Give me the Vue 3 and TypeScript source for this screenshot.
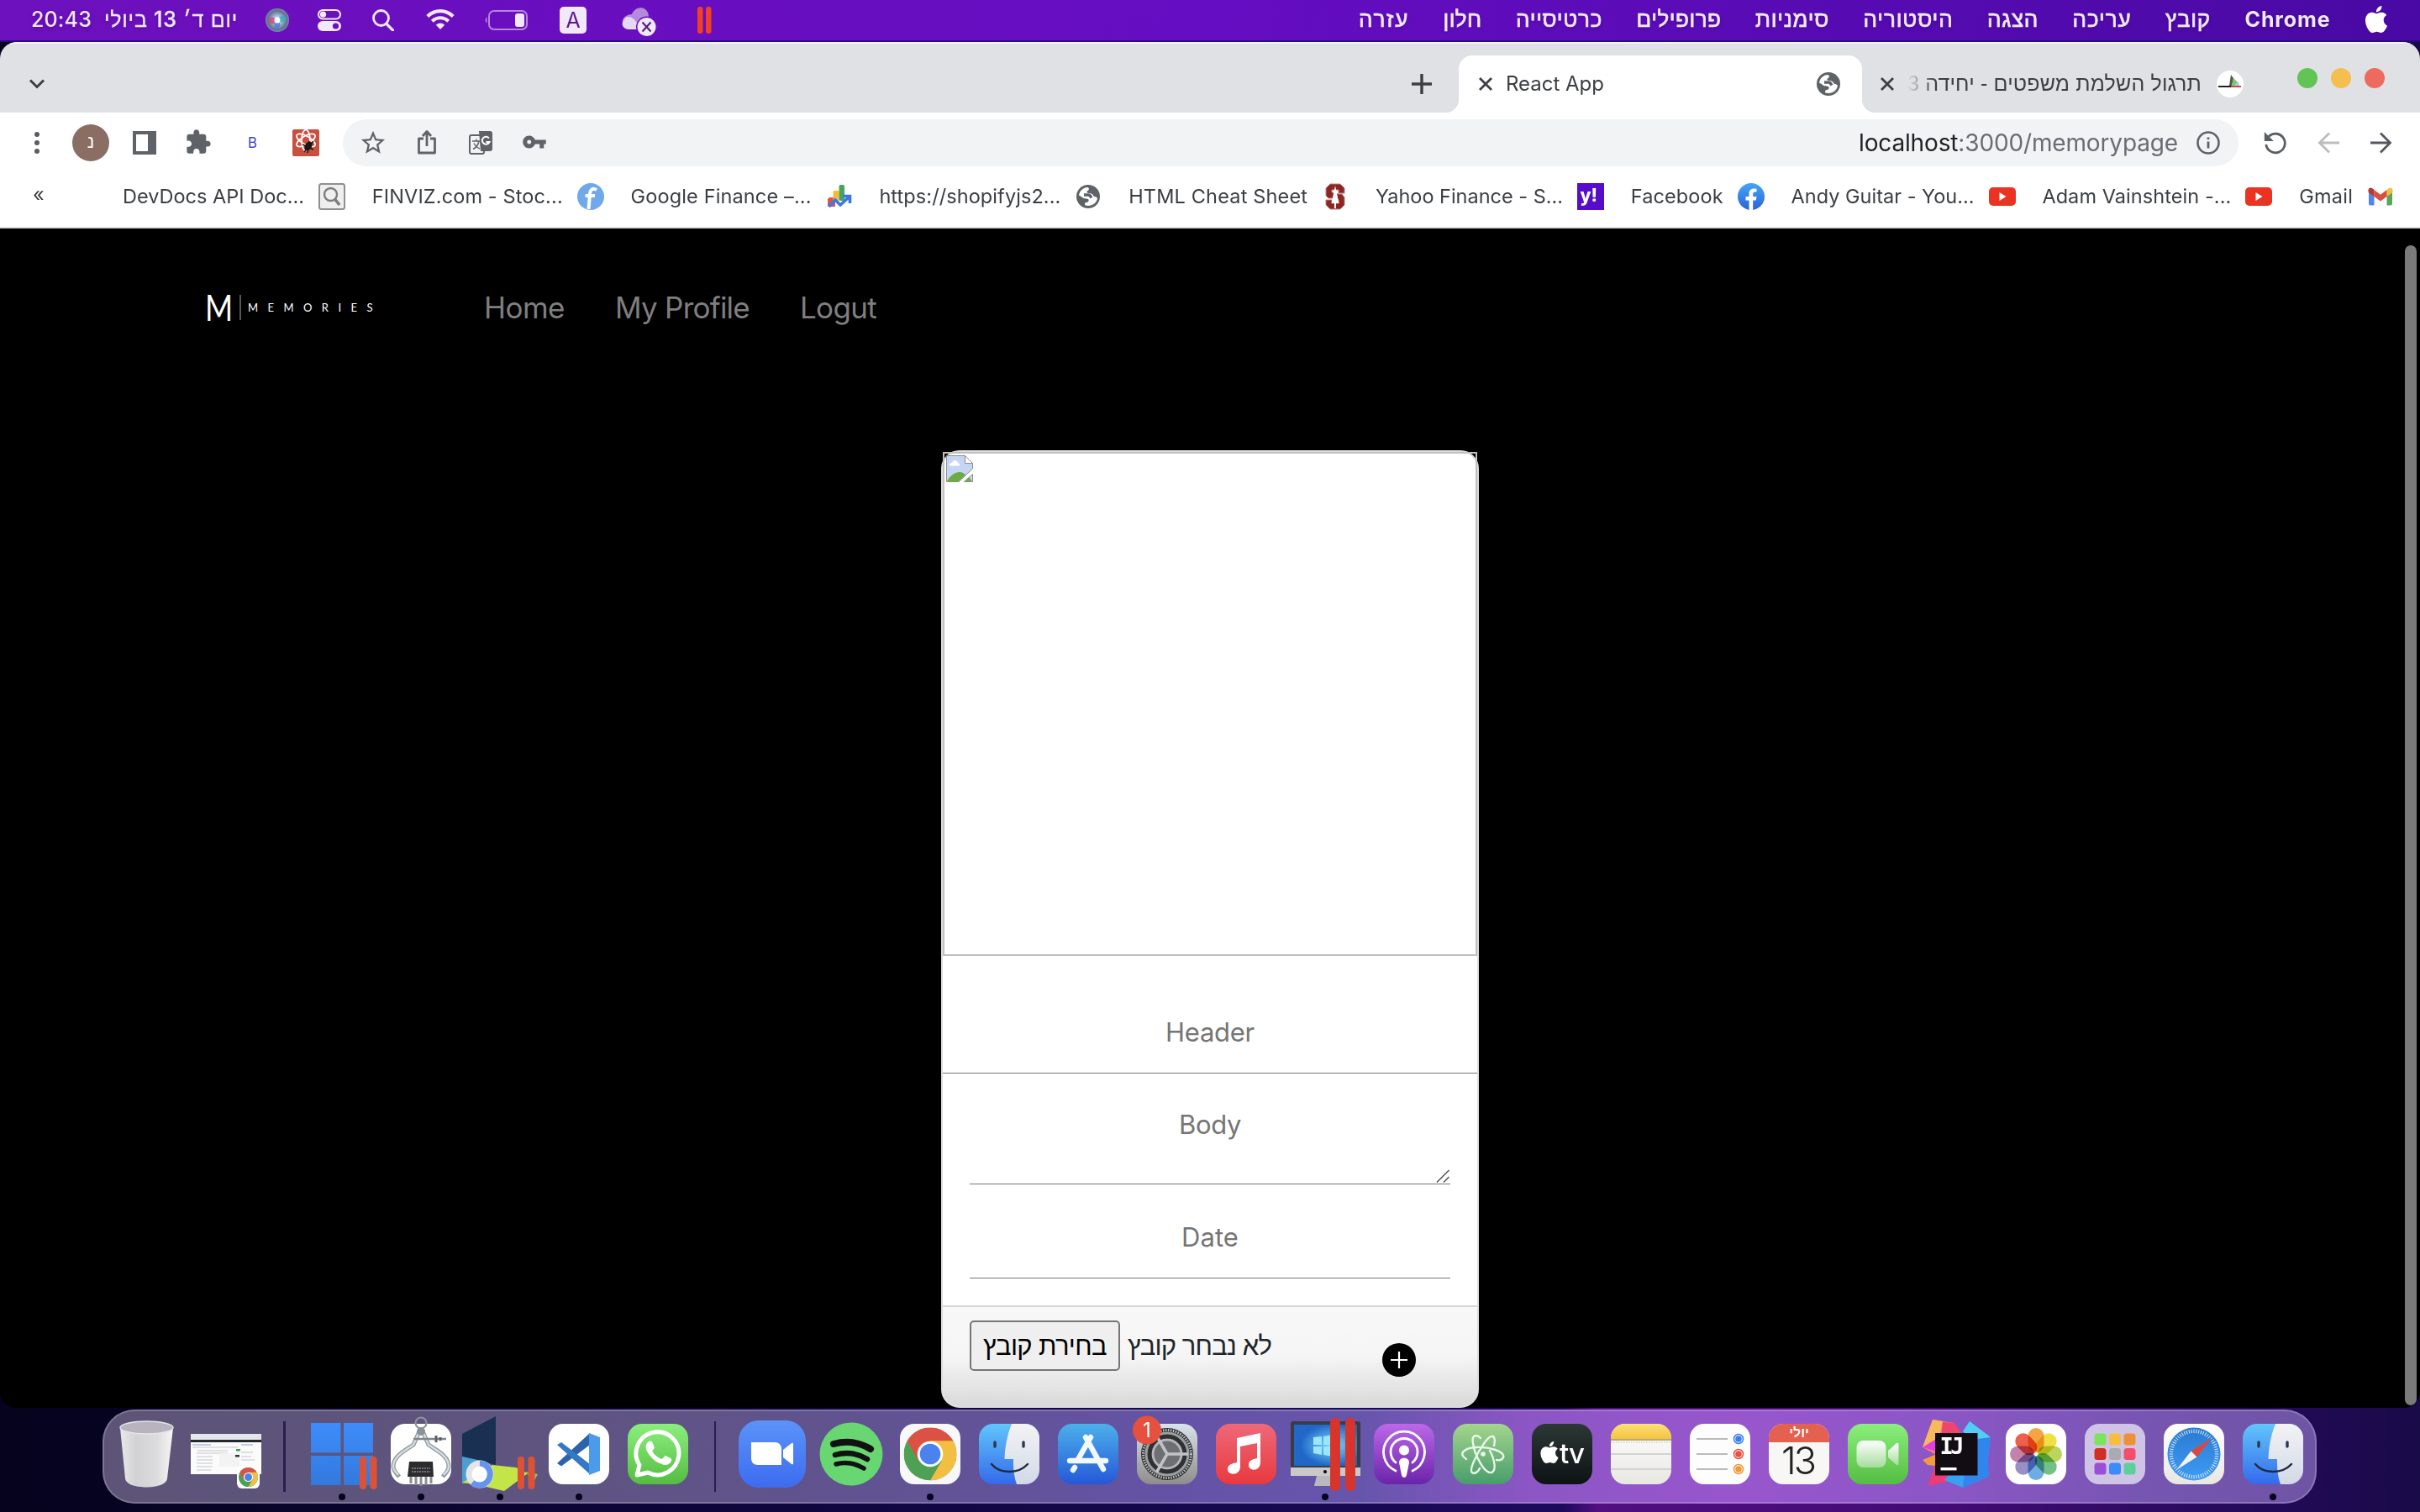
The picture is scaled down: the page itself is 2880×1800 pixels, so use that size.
<script setup lang="ts">
interface Label { text: string; width: number }
interface Bookmark extends Label { icon: string }

const menus: Label[] = [
  { text: 'עזרה', width: 60 },
  { text: 'חלון', width: 46 },
  { text: 'כרטיסייה', width: 103 },
  { text: 'פרופילים', width: 101 },
  { text: 'סימניות', width: 88 },
  { text: 'היסטוריה', width: 107 },
  { text: 'הצגה', width: 61 },
  { text: 'עריכה', width: 70 },
  { text: 'קובץ', width: 54 },
]

const bookmarks: Bookmark[] = [
  { text: 'DevDocs API Doc...', width: 216, icon: 'search' },
  { text: 'FINVIZ.com - Stoc...', width: 227, icon: 'finviz' },
  { text: 'Google Finance –...', width: 215, icon: 'gfinance' },
  { text: 'https://shopifyjs2...', width: 216, icon: 'globe' },
  { text: 'HTML Cheat Sheet', width: 213, icon: 'stanford' },
  { text: 'Yahoo Finance - S...', width: 223, icon: 'yahoo' },
  { text: 'Facebook', width: 110, icon: 'facebook' },
  { text: 'Andy Guitar - You...', width: 218, icon: 'youtube' },
  { text: 'Adam Vainshtein -...', width: 225, icon: 'youtube' },
  { text: 'Gmail', width: 64, icon: 'gmail' },
]

// Tracks the letters so that a label occupies its column width.
const vFit = {
  mounted(el: HTMLElement, binding: { value: number }) {
    const count = Array.from(el.textContent ?? '').length
    const natural = el.getBoundingClientRect().width
    el.style.letterSpacing = `${(binding.value - natural) / count}px`
  },
}

const ticks = Array.from({ length: 60 }, (_, i) => i * 6)
const petals = [
  { a: 0, c: '#f39a2b' }, { a: 45, c: '#efdb2c' }, { a: 90, c: '#b3cf45' }, { a: 135, c: '#62b777' },
  { a: 180, c: '#5ba2dc' }, { a: 225, c: '#8a7fc0' }, { a: 270, c: '#b8729f' }, { a: 315, c: '#ea4a34' },
]
const tiles = ['#7ce45a', '#f8bd3f', '#ee9136', '#cf2f26', '#a9abb0', '#f2506a', '#9a4fd8', '#3a8cf6', '#5ccf9b']
</script>

<template>
  <div class="screen">
    <svg class="defs" width="0" height="0">
      <defs>
        <linearGradient id="gBlue" x1="0" y1="0" x2="0" y2="1"><stop offset="0" stop-color="#5b93f8" /><stop offset="1" stop-color="#3d6cf0" /></linearGradient>
        <linearGradient id="gWin" x1="0" y1="0" x2="0" y2="1"><stop offset="0" stop-color="#3e8cfb" /><stop offset="1" stop-color="#3379dd" /></linearGradient>
        <linearGradient id="gGreen" x1="0" y1="0" x2="0" y2="1"><stop offset="0" stop-color="#8bee7d" /><stop offset="1" stop-color="#55bd42" /></linearGradient>
        <linearGradient id="gStore" x1="0" y1="0" x2="0" y2="1"><stop offset="0" stop-color="#4cb0ea" /><stop offset="1" stop-color="#2558d8" /></linearGradient>
        <linearGradient id="gFace" x1="0" y1="0" x2="0" y2="1"><stop offset="0" stop-color="#62c6fa" /><stop offset="1" stop-color="#3469ec" /></linearGradient>
        <linearGradient id="gFaceR" x1="0" y1="0" x2="0" y2="1"><stop offset="0" stop-color="#f3f3f5" /><stop offset="1" stop-color="#d2d9e6" /></linearGradient>
        <linearGradient id="gGrey" x1="0" y1="0" x2="0" y2="1"><stop offset="0" stop-color="#d9e3ea" /><stop offset="1" stop-color="#8f8d8a" /></linearGradient>
        <linearGradient id="gMusic" x1="0" y1="0" x2="0" y2="1"><stop offset="0" stop-color="#ee6879" /><stop offset="1" stop-color="#e83a3e" /></linearGradient>
        <linearGradient id="gPod" x1="0" y1="0" x2="0" y2="1"><stop offset="0" stop-color="#bc68e9" /><stop offset="1" stop-color="#6a24a9" /></linearGradient>
        <linearGradient id="gAtom" x1="0" y1="0" x2="0" y2="1"><stop offset="0" stop-color="#a3d58d" /><stop offset="1" stop-color="#479d6b" /></linearGradient>
        <linearGradient id="gTv" x1="0" y1="0" x2="0" y2="1"><stop offset="0" stop-color="#2c3835" /><stop offset="1" stop-color="#0e1214" /></linearGradient>
        <linearGradient id="gPaper" x1="0" y1="0" x2="0" y2="1"><stop offset="0" stop-color="#ffffff" /><stop offset="1" stop-color="#e8e7e2" /></linearGradient>
        <linearGradient id="gYellow" x1="0" y1="0" x2="0" y2="1"><stop offset="0" stop-color="#fbe07a" /><stop offset="1" stop-color="#f6c33c" /></linearGradient>
        <linearGradient id="gTrash" x1="0" y1="0" x2="1" y2="0"><stop offset="0" stop-color="#e9e9ea" /><stop offset=".3" stop-color="#d2d2d5" /><stop offset=".7" stop-color="#dcdcde" /><stop offset="1" stop-color="#f6f6f6" /></linearGradient>
        <linearGradient id="gCompass" x1="0" y1="0" x2="0" y2="1"><stop offset="0" stop-color="#2a7bd2" /><stop offset="1" stop-color="#3f9bf2" /></linearGradient>
        <linearGradient id="gCam" x1="0" y1="0" x2="0" y2="1"><stop offset="0" stop-color="#ffffff" /><stop offset="1" stop-color="#a6dc9c" /></linearGradient>
        <linearGradient id="gFb" x1="0" y1="0" x2="0" y2="1"><stop offset="0" stop-color="#45a5f5" /><stop offset="1" stop-color="#2a63d6" /></linearGradient>
        <radialGradient id="gScreen" cx=".6" cy=".5"><stop offset="0" stop-color="#7fe0fb" /><stop offset="1" stop-color="#2067c8" /></radialGradient>
        <radialGradient id="gSiri"><stop offset="0" stop-color="#ffffff" /><stop offset=".3" stop-color="#b3cbe8" /><stop offset=".8" stop-color="#5d7391" /><stop offset="1" stop-color="#7d8ba0" /></radialGradient>
        <clipPath id="sq"><rect x="11" y="11" width="72" height="72" rx="17" /></clipPath>
        <symbol id="globe" viewBox="0 0 28 28">
          <circle cx="14" cy="14" r="14" fill="#5f6368" />
          <path d="M3 12.500C3.600 7.500 8 3.200 13.500 3L15 4.500C15 7 12.500 7 12.300 9L14.500 10C18.500 10 20 12 21 14C22.800 14 24 14.500 25 16C24 21.500 19.500 25 14 25L10.500 24.500C9.500 23 10 21.500 11.500 21C14 21 15 19.500 14.500 17.500C13 16 8 17 6.500 14.500Z" fill="#fff" />
          <path d="M9 12H14C16.500 12 17 14 18 15.500" stroke="#5f6368" stroke-width="3.500" fill="none" />
        </symbol>
        <symbol id="apple" viewBox="0 0 24 24">
          <path d="M12.152 6.896c-.948 0-2.415-1.078-3.96-1.04-2.04.027-3.910 1.183-4.961 3.014-2.117 3.675-.546 9.103 1.519 12.090 1.013 1.454 2.208 3.090 3.792 3.039 1.520-.065 2.090-.987 3.935-.987 1.831 0 2.350.987 3.960.948 1.637-.026 2.676-1.480 3.676-2.948 1.156-1.688 1.636-3.325 1.662-3.415-.039-.013-3.182-1.221-3.220-4.857-.026-3.040 2.480-4.494 2.597-4.559-1.429-2.090-3.623-2.324-4.390-2.376-2-.156-3.675 1.090-4.610 1.090zM15.530 3.830c.843-1.012 1.400-2.427 1.245-3.830-1.207.052-2.662.805-3.532 1.818-.780.896-1.454 2.338-1.273 3.714 1.338.104 2.715-.688 3.559-1.701" fill="#fff" />
        </symbol>
        <symbol id="finder" viewBox="0 0 94 94">
          <g clip-path="url(#sq)">
            <rect x="11" y="11" width="72" height="72" fill="url(#gFace)" />
            <path d="M50 11C44 26 42 40 41.500 53H52C51.500 64 53 75 56 83H84V11Z" fill="url(#gFaceR)" />
          </g>
          <path d="M30 33V38M64 33V38" stroke="#2a3a4c" stroke-width="3.400" stroke-linecap="round" />
          <path d="M26 59C36 71 58 71 69 59" stroke="#1d2a3a" stroke-width="2.400" fill="none" stroke-linecap="round" />
        </symbol>
        <symbol id="chrome" viewBox="0 0 64 64">
          <circle cx="32" cy="32" r="32" fill="#4ea054" />
          <path d="M32 32L4.300 16A32 32 0 0 1 59.700 16Z" fill="#dd5144" />
          <path d="M4.300 16L18.100 40L32 32L30 16Z" fill="#dd5144" />
          <path d="M32 64L45.900 40L32 32L24 44Z" fill="#4ea054" />
          <path d="M45.900 40L32 64A32 32 0 0 0 59.700 16H32Z" fill="#f3bf42" />
          <circle cx="32" cy="32" r="15.500" fill="#fff" /><circle cx="32" cy="32" r="12.500" fill="#4a83ee" />
        </symbol>
      </defs>
    </svg>

    <header class="menubar">
      <div class="status">
        <span v-fit="72" class="clock">20:43</span>
        <span v-fit="159" class="date" dir="rtl">יום ד׳ 13 ביולי</span>
        <svg class="i-siri" width="28" height="28" viewBox="0 0 28 28">
          <circle cx="14" cy="14" r="14" fill="url(#gSiri)" />
          <path d="M3 14C6 8 11 11 14 14C10 20 6 20 3 14Z" fill="#d2487c" opacity=".8" />
          <path d="M14 14C16 8 22 8 25 11C23 17 18 18 14 14Z" fill="#3aa9c0" opacity=".8" />
          <path d="M14 14C19 17 18 23 13 25C9 22 10 17 14 14Z" fill="#4f78d8" opacity=".8" />
          <circle cx="14" cy="14" r="3.500" fill="#fff" />
        </svg>
        <svg class="i-control" width="28" height="26" viewBox="0 0 28 26">
          <rect x="1" y="1" width="26" height="10.500" rx="5.250" fill="none" stroke="#f1e8fa" stroke-width="2" />
          <circle cx="6.500" cy="6.200" r="3.600" fill="#f1e8fa" />
          <rect x="0" y="14" width="28" height="12" rx="6" fill="#f1e8fa" /><circle cx="21.500" cy="20" r="3.600" fill="#6a0fbe" />
        </svg>
        <svg class="i-search" width="26" height="26" viewBox="0 0 26 26" fill="none" stroke="#f1e8fa" stroke-width="2.800"><circle cx="10.500" cy="10.500" r="9" /><path d="M17 17.500L24.500 25" stroke-linecap="round" stroke-width="3.200" /></svg>
        <svg class="i-wifi" width="34" height="24" viewBox="0 0 34 24" fill="none" stroke="#f1e8fa" stroke-width="4.200">
          <path d="M1.800 8.500C10.500 .1 23.500 .1 32.200 8.500" /><path d="M7.300 14.200C13 8.900 21 8.900 26.700 14.200" /><path d="M17 24L11.800 18.700C15 15.900 19 15.900 22.200 18.700Z" fill="#f1e8fa" stroke="none" />
        </svg>
        <svg class="i-battery" width="52" height="24" viewBox="0 0 52 24">
          <rect x="6" y="1" width="45" height="22" rx="6" fill="none" stroke="#b784df" stroke-width="2" />
          <path d="M3.500 8.500C1 10 1 14 3.500 15.500Z" fill="#b784df" /><rect x="37" y="4" width="11" height="16" rx="3" fill="#f1e8fa" />
        </svg>
        <span class="lang">A</span>
        <svg class="i-cloud" width="42" height="36" viewBox="0 0 42 36">
          <path d="M12 8C15 -1 27 -3 31 6C33 11 32 19 30 26H8C-2 22 -2 9 12 8Z" fill="#b48bdc" /><path d="M2 15C5 9 12 10 17 17L26 26H8C1 25 -1 20 2 15Z" fill="#e6d8f3" />
          <circle cx="29.500" cy="23" r="12.500" fill="#6a0fbe" /><circle cx="29.500" cy="23" r="11" fill="#f1e8fa" />
          <path d="M24.500 17.500L34.500 28.500M34.500 17.500L24.500 28.500" stroke="#4f1a80" stroke-width="2" />
        </svg>
        <svg class="i-bars" width="17" height="32" viewBox="0 0 17 32"><rect width="6.500" height="32" rx="3" fill="#f04123" /><rect x="10" width="6.500" height="32" rx="3" fill="#f04123" /></svg>
      </div>
      <nav class="menus">
        <span v-for="m in menus" :key="m.text" v-fit="m.width" class="he">{{ m.text }}</span>
        <b v-fit="102">Chrome</b>
        <svg width="32" height="32" viewBox="0 0 24 24"><use href="#apple" /></svg>
      </nav>
    </header>

    <main class="window">
      <div class="tabs">
        <svg class="i-chev" width="22" height="14" viewBox="0 0 22 14"><path d="M3 2.500L11 10.500L19 2.500" fill="none" stroke="#3b3e42" stroke-width="3" /></svg>
        <div class="grow"></div>
        <svg class="i-plus" width="24" height="24" viewBox="0 0 24 24"><path d="M12 0V24M0 12H24" stroke="#3b3e42" stroke-width="3.400" /></svg>
        <div class="tab">
          <svg width="16" height="16" viewBox="0 0 16 16"><path d="M1 1L15 15M15 1L1 15" stroke="#3b3e42" stroke-width="2.800" /></svg>
          <span v-fit="117">React App</span>
          <div class="grow"></div>
          <svg width="28" height="28"><use href="#globe" /></svg>
        </div>
        <svg class="i-close" width="16" height="16" viewBox="0 0 16 16"><path d="M1 1L15 15M15 1L1 15" stroke="#3b3e42" stroke-width="2.800" /></svg>
        <div class="title"><span v-fit="350" class="he" dir="rtl">תרגול השלמת משפטים - יחידה 3</span></div>
        <svg class="i-fav" width="32" height="32" viewBox="0 0 32 32"><circle cx="16" cy="16" r="16" fill="#fff" /><path d="M15 18L17 5L20 9L18 18Z" fill="#505a50" /><path d="M18 18L20 9L25 14L22 18Z" fill="#7cc36a" /><path d="M20 18L26 13L27 18Z" fill="#9fd0e8" /><path d="M2 19H17" stroke="#222" stroke-width="2.200" /><path d="M17 19H29" stroke="#d8463a" stroke-width="2.200" /></svg>
        <i class="light green"></i><i class="light yellow"></i><i class="light red"></i>
      </div>

      <div class="toolbar">
        <svg class="i-dots" width="6" height="28" viewBox="0 0 6 28" fill="#5a5e63"><circle cx="3" cy="4" r="3" /><circle cx="3" cy="14" r="3" /><circle cx="3" cy="24" r="3" /></svg>
        <span class="avatar he">נ</span>
        <svg class="i-panel" width="28" height="28" viewBox="0 0 28 28"><path d="M0 0H28V28H0ZM4 4V24H18V4Z" fill="#5f6368" fill-rule="evenodd" /></svg>
        <svg class="i-ext" width="31" height="31" viewBox="1 0 23 23"><path d="M20.500 11H19V7c0-1.100-.9-2-2-2h-4V3.500C13 2.120 11.880 1 10.500 1S8 2.120 8 3.500V5H4c-1.100 0-1.990.9-1.990 2v3.800H3.500c1.490 0 2.700 1.210 2.700 2.700s-1.210 2.700-2.700 2.700H2V20c0 1.100.9 2 2 2h3.800v-1.500c0-1.490 1.210-2.700 2.700-2.700 1.490 0 2.700 1.210 2.700 2.700V22H17c1.100 0 2-.9 2-2v-4h1.500c1.380 0 2.500-1.120 2.500-2.500S21.880 11 20.500 11z" fill="#5f6368" /></svg>
        <span class="bee">B</span>
        <svg class="i-react" width="32" height="32" viewBox="0 0 32 32"><rect width="32" height="32" rx="2" fill="#c9503e" /><g fill="none" stroke="#fff" stroke-width="1.700" transform="rotate(30 16 13)"><ellipse cx="16" cy="13" rx="12.500" ry="5" /><ellipse cx="16" cy="13" rx="12.500" ry="5" transform="rotate(60 16 13)" /><ellipse cx="16" cy="13" rx="12.500" ry="5" transform="rotate(120 16 13)" /></g><ellipse cx="19" cy="20" rx="4" ry="6" fill="#1f1512" transform="rotate(30 19 20)" /><path d="M12 18L25 24M14 27L25 14M20 14L18 28" stroke="#1f1512" stroke-width="1.500" /></svg>
        <div class="omnibox">
          <svg class="o-star" width="34" height="34" viewBox="0 0 24 24"><path d="M22 9.240l-7.190-.62L12 2 9.190 8.630 2 9.240l5.460 4.730L5.820 21 12 17.270 18.180 21l-1.630-7.030L22 9.240zM12 15.400l-3.760 2.270 1-4.280-3.320-2.880 4.380-.38L12 6.100l1.710 4.040 4.380.38-3.320 2.880 1 4.280L12 15.400z" fill="#5f6368" /></svg>
          <svg class="o-share" width="24" height="30" viewBox="0 0 24 30" fill="none" stroke="#5f6368" stroke-width="2.800"><path d="M8 11H2.500V28H21.500V11H16M12 20V3M7 8L12 2.500L17 8" stroke-linejoin="round" /></svg>
          <svg class="o-trans" width="28" height="28" viewBox="0 0 28 28"><rect x="1" y="5" width="17" height="22" rx="2" fill="none" stroke="#5f6368" stroke-width="2" /><path d="M12 0H25A3 3 0 0 1 28 3V21A3 3 0 0 1 25 24H14Z" fill="#5f6368" /><path d="M4 12H13M9 9.500V12M12 12C11 17 8 20 5 21.500M6 14.500C8 18 10 20 13 21" stroke="#5f6368" stroke-width="1.500" fill="none" /><path d="M24 8.500A4.500 4.500 0 1 0 24.500 13H20.500" stroke="#fff" stroke-width="2" fill="none" /></svg>
          <svg class="o-key" width="30" height="30" viewBox="0 0 24 24"><path d="M12.650 10C11.830 7.670 9.610 6 7 6c-3.310 0-6 2.690-6 6s2.690 6 6 6c2.610 0 4.830-1.670 5.650-4H17v4h4v-4h2v-4H12.650zM7 14c-1.100 0-2-.9-2-2s.9-2 2-2 2 .9 2 2-.9 2-2 2z" fill="#5f6368" /></svg>
          <div class="grow"></div>
          <span v-fit="380" class="url"><em>localhost</em>:3000/memorypage</span>
          <svg width="28" height="28" viewBox="0 0 28 28"><circle cx="14" cy="14" r="12.500" fill="none" stroke="#5f6368" stroke-width="2.600" /><path d="M14 12.500V20.500M14 7.500V10" stroke="#5f6368" stroke-width="2.800" /></svg>
        </div>
        <svg class="i-reload" width="28" height="28" viewBox="0 0 28 28"><path d="M6 6.500A11.300 11.300 0 1 1 2.800 16" fill="none" stroke="#5a5e63" stroke-width="2.800" /><path d="M.8 1V12H11.800Z" fill="#5a5e63" /></svg>
        <svg class="i-nav" width="26" height="26" viewBox="0 0 26 26" fill="none" stroke="#babcbe" stroke-width="2.800"><path d="M26 13H3M14 1.500L2.500 13L14 24.500" /></svg>
        <svg class="i-nav" width="26" height="26" viewBox="0 0 26 26" fill="none" stroke="#55595e" stroke-width="2.800"><path d="M0 13H23M12 1.500L23.500 13L12 24.500" /></svg>
      </div>

      <div class="bookmarks">
        <span class="more">«</span>
        <div v-for="b in bookmarks" :key="b.text" class="bm">
          <span v-fit="b.width">{{ b.text }}</span>
          <svg width="32" height="32" viewBox="0 0 32 32">
            <template v-if="b.icon === 'search'"><rect x="1" y="1" width="30" height="30" rx="2.500" fill="#efefef" stroke="#8f8f8f" stroke-width="2" /><circle cx="14.500" cy="13.500" r="7.500" fill="none" stroke="#7d7d7d" stroke-width="2.400" /><path d="M19.500 19L25 26" stroke="#7d7d7d" stroke-width="3.600" /></template>
            <template v-else-if="b.icon === 'finviz'"><circle cx="16" cy="16" r="16" fill="#70a8ec" /><path d="M23 8C18 5 15.500 8 15 13L13.500 31M9.500 15H21" stroke="#fff" stroke-width="4" fill="none" /></template>
            <template v-else-if="b.icon === 'gfinance'"><path d="M4 17H11V28H2V19Z" fill="#e0533f" /><rect x="8.500" y="9" width="7" height="14" rx="1.500" fill="#f3bb3c" /><rect x="15.500" y="2" width="6.500" height="19" rx="2" fill="#4aa35a" /><path d="M3.500 28L11 20L17 26L28 16M20 15.500H28.500V24" stroke="#3b78e7" stroke-width="3.600" fill="none" /></template>
            <template v-else-if="b.icon === 'globe'"><use href="#globe" x="2" y="2" width="28" height="28" /></template>
            <template v-else-if="b.icon === 'stanford'"><path d="M10 1H22L27 6V12H20V8H12V11L20 13H24L27 17V26L22 31H10L5 26V20H12V24H20V20L12 18H8L5 15V6Z" fill="#8c2623" stroke="#b98380" /><path d="M16 3L20.500 24H17V30H15V24H11.500Z" fill="#fff" /></template>
            <template v-else-if="b.icon === 'yahoo'"><rect width="32" height="32" fill="#560cc8" /><text x="3.500" y="22" class="yahoo">y!</text></template>
            <template v-else-if="b.icon === 'facebook'"><circle cx="16" cy="16" r="16" fill="url(#gFb)" /><path d="M13.500 32V20.500H9.500V16H13.500V12.500C13.500 8.500 16 6.500 19.500 6.500L22.500 6.800V10.600H20.500C18.700 10.600 18.200 11.600 18.200 13V16H22.500L21.800 20.500H18.200V32Z" fill="#fff" /></template>
            <template v-else-if="b.icon === 'youtube'"><rect y="5" width="32" height="22" rx="5" fill="#ea3323" /><path d="M12.500 11V21L20.500 16Z" fill="#fff" /></template>
            <template v-else><path d="M2 7V24.500A2 2 0 0 0 4 26.500H8.500V14Z" fill="#5086ec" /><path d="M30 7V24.500A2 2 0 0 1 28 26.500H23.500V14Z" fill="#58a55c" /><path d="M23.500 8L26 6C28 4.500 30.500 6 30.500 8.500V11L23.500 16Z" fill="#f1bf42" /><path d="M1.500 11V8.500C1.500 6 4 4.500 6 6L8.500 8V16Z" fill="#b63a2e" /><path d="M8.500 8L16 13.800L23.500 8V16L16 21.500L8.500 16Z" fill="#dc4d3f" /></template>
          </svg>
        </div>
      </div>

      <div class="page">
        <nav class="nav">
          <span class="logo">M</span>
          <i class="rule"></i>
          <span v-fit="160" class="brand">MEMORIES</span>
          <a v-fit="96" class="home">Home</a>
          <a v-fit="160">My Profile</a>
          <a v-fit="91">Logut</a>
        </nav>
        <section class="card">
          <div class="photo">
            <svg width="32" height="32" viewBox="0 0 32 32">
              <path d="M.5 .5H22.500L31.500 9.500V16L15 31.500H.5Z" fill="#c6d5f6" stroke="#8e8e8e" /><path d="M31.500 22.500V31.500H21.500Z" fill="#c6d5f6" stroke="#8e8e8e" />
              <path d="M22.500 .5V9.500H31.500Z" fill="#fff" stroke="#8e8e8e" /><path d="M4 12.500C3 9.500 6 9 7 9C8 5 13 5 14 9C16.500 9.500 16.500 12 15.500 12.500Z" fill="#fff" />
              <path d="M1 31C5 24 10 20 16 20C19 20 21.500 21.500 23 23.500L14.500 31.500H1ZM22 31L27.500 26L30.500 31Z" fill="#6cab46" />
            </svg>
          </div>
          <div class="field first"><span v-fit="106">Header</span></div>
          <div class="field body"><span v-fit="74">Body</span>
            <svg class="grip" width="16" height="16" viewBox="0 0 16 16"><path d="M1 15.500L15.500 1M9 15.500L15.500 9" stroke="#4c4c4c" stroke-width="1.400" /></svg>
          </div>
          <div class="field dated"><span v-fit="68">Date</span></div>
          <footer class="foot">
            <span class="button"><span v-fit="147" class="he">בחירת קובץ</span></span>
            <span v-fit="171" class="he chosen">לא נבחר קובץ</span>
            <svg class="add" width="40" height="40" viewBox="0 0 40 40"><circle cx="20" cy="20" r="20" /><path d="M20 10V30M10 20H30" stroke="#fff" stroke-width="2.200" /></svg>
          </footer>
        </section>
        <i class="scroll"></i>
      </div>
    </main>

    <footer class="dock">
      <!-- Trash -->
      <svg viewBox="0 -6 94 112"><path d="M16 16L22 76C23 90 71 90 72 76L79 16Z" fill="url(#gTrash)" /><ellipse cx="47.500" cy="15.500" rx="31.500" ry="7.500" fill="#b7b4c0" stroke="#e5e5e8" stroke-width="1.500" /></svg>
      <!-- Minimised browser window -->
      <svg viewBox="0 -6 94 112">
        <rect x="6" y="23" width="84" height="48" fill="#fbfbfb" /><path d="M6 23H90V30H6Z" fill="#e4e6ea" /><path d="M6 30H90V33H6Z" fill="#24292e" />
        <path d="M8 36H30M66 36H80" stroke="#7f9fd0" stroke-width="1.200" /><path d="M8 39H62M14 43H50M13 46H50M13 50H32M13 54H32M13 58H32M13 62H32M13 66H30M42 50H55M42 54H54M66 45H80M66 50H78M66 54H82" stroke="#c3c6ca" stroke-width="1.200" /><rect x="60" y="41" width="5" height="2.500" fill="#43a047" /><rect x="40" y="46" width="24" height="16" fill="#f3f3f3" /><rect x="59" y="48" width="5" height="2.500" fill="#333" />
        <rect x="61" y="62" width="27" height="26" rx="6" fill="#fff" /><use href="#chrome" x="63" y="63" width="23" height="23" />
      </svg>
      <i class="sep"></i>
      <!-- Windows -->
      <svg viewBox="0 -6 94 112"><path d="M10 10H45.500V45.500H10ZM49 10H84V45.500H49ZM10 49H45.500V84H10ZM49 49H84V84H49Z" fill="url(#gWin)" /><rect x="68" y="50" width="8" height="39" rx="4" fill="#dd5235" /><rect x="80.500" y="50" width="8" height="39" rx="4" fill="#dd5235" /><circle class="dot" cx="47" cy="98" r="4" /></svg>
      <!-- System information -->
      <svg viewBox="0 -6 94 112">
        <rect x="11" y="11" width="72" height="72" rx="17" fill="#fff" /><g fill="none"><circle cx="47" cy="10" r="6.500" stroke="#8d949a" stroke-width="2.200" /><path d="M45 20L38 36C26 44 14 50 14 62C14 67 18 70 21 74M49 20L56 36C68 44 80 50 80 62C80 67 76 70 73 74" stroke="#8f999f" stroke-width="5" /><path d="M45 20L38 36C26 44 14 50 14 62C14 67 18 69 20 72M49 20L56 36C68 44 80 50 80 62C80 67 76 69 74 72" stroke="#d6dde0" stroke-width="2.400" /><path d="M38 29H77" stroke="#7f878c" stroke-width="2.600" /><path d="M65 25V33M70 27V31" stroke="#596066" stroke-width="3" /></g>
        <circle cx="47" cy="20" r="5" fill="#89929a" /><path d="M33 56H61L62 74H31Z" fill="#2c2c2e" /><path d="M36 64H58M36 68H58" stroke="#8c8c8c" stroke-width="1.400" stroke-dasharray="2 1" /><path d="M35 74V82M41 74V84M47 74V85M53 74V84M59 74V82" stroke="#8b8d90" stroke-width="3" /><circle class="dot" cx="47" cy="98" r="4" />
      </svg>
      <!-- Virtual machine assistant -->
      <svg viewBox="0 -6 94 112"><path d="M2 23L42 2V60L2 50Z" fill="#193052" /><path d="M2 50L30 56L22 80L2 82Z" fill="#4c9fd0" /><path d="M2 81L38 60L66 63L80 70L52 91L22 84Z" fill="#c3e548" /><path d="M78 68L92 71L86 82Z" fill="#9fc05a" /><circle cx="23" cy="71" r="13" fill="#fff" stroke="#e3e4e8" stroke-width="7" /><path d="M23 58A13 13 0 1 1 14 81" fill="none" stroke="#6495ed" stroke-width="7" /><rect x="68" y="50" width="8" height="39" rx="4" fill="#dd5235" /><rect x="80.500" y="50" width="8" height="39" rx="4" fill="#dd5235" /><circle class="dot" cx="47" cy="98" r="4" /></svg>
      <!-- VS Code -->
      <svg viewBox="0 -6 94 112"><rect x="11" y="11" width="72" height="72" rx="17" fill="#fff" /><path d="M21 58L26 61.500L60 36V22Z" fill="#2b64a9" /><path d="M21 36L26 33L60 59V71Z" fill="#3478c6" /><path d="M59 22L72 27V67L59 72Z" fill="#4a9bea" /><circle class="dot" cx="47" cy="98" r="4" /></svg>
      <!-- WhatsApp -->
      <svg viewBox="0 -6 94 112"><rect x="11" y="11" width="72" height="72" rx="17" fill="url(#gGreen)" /><path d="M22 72L25 60A25.500 25.500 0 1 1 35 69Z" fill="none" stroke="#fff" stroke-width="5" stroke-linejoin="round" /><g transform="translate(17.500 15.500) scale(2.520)"><path d="M17.472 14.382c-.297-.149-1.758-.867-2.030-.967-.273-.099-.471-.148-.670.150-.197.297-.767.966-.940 1.164-.173.199-.347.223-.644.075-.297-.150-1.255-.463-2.390-1.475-.883-.788-1.480-1.761-1.653-2.059-.173-.297-.018-.458.130-.606.134-.133.298-.347.446-.520.149-.174.198-.298.298-.497.099-.198.050-.371-.025-.520-.075-.149-.669-1.612-.916-2.207-.242-.579-.487-.500-.669-.510-.173-.008-.371-.010-.570-.010-.198 0-.520.074-.792.372-.272.297-1.040 1.016-1.040 2.479 0 1.462 1.065 2.875 1.213 3.074.149.198 2.096 3.200 5.077 4.487.709.306 1.262.489 1.694.625.712.227 1.360.195 1.871.118.571-.085 1.758-.719 2.006-1.413.248-.694.248-1.289.173-1.413-.074-.124-.272-.198-.570-.347" fill="#fff" /></g></svg>
      <i class="sep narrow"></i>
      <!-- Zoom -->
      <svg viewBox="0 -6 94 112"><rect x="7" y="7" width="80" height="80" rx="24" fill="url(#gBlue)" /><path d="M22 33H50C55 33 58 36 58 41V60H30C25 60 22 57 22 52ZM60 42L70 34Q72 33 72 35V58Q72 60 70 59L60 51Z" fill="#fff" /></svg>
      <!-- Spotify -->
      <svg viewBox="0 -6 94 112"><circle cx="47" cy="47" r="37.500" fill="#68d671" /><g fill="none" stroke="#111" stroke-linecap="round"><path d="M26 35C41 31 57 33 70 41" stroke-width="8" /><path d="M28 48C41 44 54 46 66 53" stroke-width="6.500" /><path d="M29 59C40 56 52 58 62 64" stroke-width="5.500" /></g></svg>
      <!-- Chrome -->
      <svg viewBox="0 -6 94 112"><rect x="11" y="11" width="72" height="72" rx="17" fill="#f8f8fa" /><use href="#chrome" x="15.500" y="15.500" width="63" height="63" /><circle class="dot" cx="47" cy="98" r="4" /></svg>
      <svg viewBox="0 -6 94 112"><use href="#finder" width="94" height="94" /></svg>
      <!-- App Store -->
      <svg viewBox="0 -6 94 112"><rect x="11" y="11" width="72" height="72" rx="17" fill="url(#gStore)" /><g stroke="#f3f8ff" stroke-width="6.500" stroke-linecap="round"><path d="M50 27L34 55M44 27L65 65M25 55H68M31 63L29 66" /></g></svg>
      <!-- System preferences -->
      <svg viewBox="0 -6 94 112">
        <rect x="11" y="11" width="72" height="72" rx="17" fill="url(#gGrey)" /><circle cx="47" cy="47" r="31" fill="#2f3032" /><circle cx="47" cy="47" r="28.500" fill="none" stroke="#bfc3c6" stroke-width="3" stroke-dasharray="1.500 1.500" /><circle cx="47" cy="47" r="25" fill="none" stroke="#9c9fa2" stroke-width="3" /><circle cx="47" cy="47" r="17" fill="#6d7073" stroke="#b4b7ba" stroke-width="3" /><circle cx="47" cy="47" r="19.500" fill="none" stroke="#333" stroke-width="2" stroke-dasharray="1.500 1.500" />
        <path d="M47 47H72M47 47L34.500 25.500M47 47L34.500 68.500" stroke="#c1c4c7" stroke-width="3.500" /><circle cx="23" cy="18.500" r="17" fill="#e5503f" /><text x="23" y="27" text-anchor="middle" class="count">1</text>
      </svg>
      <!-- Music -->
      <svg viewBox="0 -6 94 112"><rect x="11" y="11" width="72" height="72" rx="17" fill="url(#gMusic)" /><path d="M36 28L64 22V57C64 68 50 68 50 60C50 55 54 53 60 52V34L40 38V62C40 73 25 73 25 65C25 60 30 58 36 57Z" fill="#fff" /></svg>
      <!-- Parallels Desktop -->
      <svg viewBox="0 -6 94 112"><rect x="6" y="8" width="83" height="56" rx="3" fill="#3b3c42" /><rect x="10" y="12" width="75" height="49" fill="url(#gScreen)" /><rect x="6" y="63" width="83" height="10" fill="#c9c9cb" /><circle cx="47" cy="68" r="2" /><path d="M37 73H57L60 85H34Z" fill="#b9b9bb" /><path d="M33 27L43 26V36H33ZM45 26L57 24V36H45ZM33 38H43V48L33 46ZM45 38H57V50L45 48Z" fill="#9be6fb" /><rect x="53" y="4" width="12" height="87" rx="6" fill="#d7352b" /><rect x="71" y="4" width="12" height="87" rx="6" fill="#d7352b" /><circle class="dot" cx="47" cy="98" r="4" /></svg>
      <!-- Podcasts -->
      <svg viewBox="0 -6 94 112"><rect x="11" y="11" width="72" height="72" rx="17" fill="url(#gPod)" /><g fill="none" stroke="#fff" stroke-width="2.800" stroke-linecap="round"><path d="M37 67A24.500 24.500 0 1 1 57 67" /><path d="M37 57A16 16 0 1 1 57 57" /></g><circle cx="47" cy="42.500" r="6" fill="#fff" /><path d="M41 57C41 50 53 50 53 57L50 72C49 76 45 76 44 72Z" fill="#fff" /></svg>
      <!-- Atom -->
      <svg viewBox="0 -6 94 112"><rect x="11" y="11" width="72" height="72" rx="17" fill="url(#gAtom)" /><g fill="none" stroke="#e9f7ea" stroke-width="2.400" stroke-linecap="round"><path d="M27 53C17 47 24 40 38 39C54 38 74 44 71 51C70 54 66 55 63 54" /><path d="M60 37C63 24 57 22 49 33C39 47 30 66 34 69C36 71 41 69 43 64" /><path d="M44 28C39 23 33 24 35 34C37 49 49 71 57 69C63 67 61 54 55 43" /></g><circle cx="47" cy="47" r="2.800" fill="#e9f7ea" /></svg>
      <!-- Apple TV -->
      <svg viewBox="0 -6 94 112"><rect x="11" y="11" width="72" height="72" rx="17" fill="url(#gTv)" /><use href="#apple" x="19" y="32" width="26" height="26" /><text x="44" y="57.500" class="tv" textLength="30">tv</text></svg>
      <!-- Notes -->
      <svg viewBox="0 -6 94 112"><g clip-path="url(#sq)"><rect x="11" y="11" width="72" height="72" fill="url(#gPaper)" /><rect x="11" y="11" width="72" height="18" fill="url(#gYellow)" /><path d="M11 30H83" stroke="#a58d52" stroke-width="1.500" /><path d="M11 33H83" stroke="#b9b9b9" stroke-dasharray="1.500 1.500" /><path d="M11 47H83M11 65H83" stroke="#c9c9c9" stroke-width="1.400" /></g></svg>
      <!-- Reminders -->
      <svg viewBox="0 -6 94 112"><rect x="11" y="11" width="72" height="72" rx="17" fill="#fdfdfd" /><path d="M19 29H56M19 47H56M19 65H56" stroke="#b9babd" stroke-width="1.800" /><g stroke-width="1.500" fill="none"><circle cx="69" cy="29" r="5.500" stroke="#3b7df0" /><circle cx="69" cy="47" r="5.500" stroke="#e5503f" /><circle cx="69" cy="65" r="5.500" stroke="#eb9a3a" /></g><circle cx="69" cy="29" r="3.800" fill="#3b7df0" /><circle cx="69" cy="47" r="3.800" fill="#e5503f" /><circle cx="69" cy="65" r="3.800" fill="#eb9a3a" /></svg>
      <!-- Calendar -->
      <svg viewBox="0 -6 94 112"><g clip-path="url(#sq)"><rect x="11" y="11" width="72" height="72" fill="#f8f7f6" /><rect x="11" y="11" width="72" height="22" fill="#e4604f" /></g><text x="47" y="27" text-anchor="middle" class="month">יולי</text><text x="47" y="71" text-anchor="middle" class="day" textLength="42">13</text></svg>
      <!-- FaceTime -->
      <svg viewBox="0 -6 94 112"><rect x="11" y="11" width="72" height="72" rx="17" fill="url(#gGreen)" /><rect x="21.500" y="31" width="35" height="32" rx="8" fill="url(#gCam)" /><path d="M59 43L69 34Q71.500 33 71.500 36V58Q71.500 61 69 60L59 51Z" fill="url(#gCam)" /></svg>
      <!-- IntelliJ IDEA -->
      <svg viewBox="0 -6 94 112"><path d="M18 6L44 10L60 44L22 48L6 39Z" fill="#f37b78" /><path d="M18 6L30 8L24 36L6 39Z" fill="#f6b95c" /><path d="M30 9L44 10L56 28L28 30Z" fill="#f0436e" /><path d="M6 39L24 28V44Z" fill="#e43be4" /><path d="M6 54L30 44V62L12 60Z" fill="#f79a3c" /><path d="M22 58L12 85L54 76L36 56Z" fill="#ef3a78" /><path d="M32 78L46 60L60 70L54 87Z" fill="#3aa0f0" /><path d="M62 8L87 27L84 54L85 74L54 87L60 30L54 20Z" fill="#3186ee" /><path d="M62 8L87 27L64 30L54 20Z" fill="#52cdf7" /><rect x="21" y="22" width="50.500" height="50.500" fill="#120d12" /><text x="26.500" y="47" class="ij" textLength="29" lengthAdjust="spacing">IJ</text><rect x="27.500" y="63" width="19" height="3.400" fill="#fff" /></svg>
      <!-- Photos -->
      <svg viewBox="0 -6 94 112"><rect x="11" y="11" width="72" height="72" rx="17" fill="#fff" /><rect v-for="p in petals" :key="p.a" class="petal" x="37.500" y="16" width="19" height="29" rx="9.500" :fill="p.c" :transform="`rotate(${p.a} 47 47)`" /></svg>
      <!-- Launchpad -->
      <svg viewBox="0 -6 94 112"><rect x="11" y="11" width="72" height="72" rx="17" fill="#d0c4e6" /><rect v-for="(t, i) in tiles" :key="i" :x="22.5 + (i % 3) * 17.5" :y="22.5 + Math.floor(i / 3) * 17.5" width="14" height="14" rx="3.500" :fill="t" /></svg>
      <!-- Safari -->
      <svg viewBox="0 -6 94 112"><rect x="11" y="11" width="72" height="72" rx="17" fill="url(#gPaper)" /><circle cx="47" cy="47" r="31.500" fill="url(#gCompass)" /><path v-for="t in ticks" :key="t" d="M47 17.500V22" stroke="#e8f2fc" stroke-width=".9" :transform="`rotate(${t} 47 47)`" /><path d="M68 28L43.500 43.500L50.500 50.500Z" fill="#e1463a" /><path d="M26 66L43.500 43.500L50.500 50.500Z" fill="#f3f3f3" /></svg>
      <svg viewBox="0 -6 94 112"><use href="#finder" width="94" height="94" /><circle class="dot" cx="47" cy="98" r="4" /></svg>
    </footer>
  </div>
</template>

<style>
body { overflow: hidden; background: #0d0533; }
</style>

<style scoped>
.screen { width: 2880px; height: 1800px; overflow: hidden; display: flex; flex-direction: column; background: linear-gradient(to right, #05031d 0, #0d0538 750px, #17094f 1500px, #1c0a5c 1860px, #510f80 1900px, #430b75 2300px, #220a58 2700px, #190a48 2880px); font-family: Inter, "Liberation Sans", sans-serif; color: #3b3e42; }
.screen svg { flex: none; display: block; }
.screen span, .screen b, .screen a { white-space: nowrap; flex: none; }
.defs { position: absolute; }
.he { font-family: "Liberation Sans", "Open Sans", sans-serif; }
.grow { flex: 1; }

.menubar { flex: none; height: 48px; border-bottom: 2px solid #2a0a80; display: flex; justify-content: space-between; background: linear-gradient(to right, #6d10bd, #650dc2 50%, #4909a4); color: #f1e8fa; font-size: 25px; text-shadow: 0 2px 4px rgba(0, 0, 0, .2); }
.status { display: flex; align-items: center; padding-left: 37px; }
.clock { margin-top: -2px; font-weight: 500; }
.date { margin: -2px 0 0 15px; font-weight: 500; -webkit-text-stroke: .3px #f1e8fa; }
.i-siri { margin-left: 33px; }
.i-control { margin-left: 34px; }
.i-search { margin-left: 37px; }
.i-wifi { margin: -2px 0 0 38px; }
.i-battery { margin-left: 35px; }
.lang { margin-left: 38px; width: 32px; height: 32px; line-height: 32px; text-align: center; border-radius: 5px; background: #f1e8fa; color: #5c1796; text-shadow: none; }
.i-cloud { margin: 6px 0 0 42px; }
.i-bars { margin-left: 48px; }
.menus { display: flex; align-items: center; gap: 40.5px; padding: 0 37px 2px 0; }
.menus .he { font-size: 26px; -webkit-text-stroke: .7px #f1e8fa; }
.menus b { font-weight: 700; }
.menus svg { margin: 0 -1px 0 -2px; }

.window { flex: none; height: 1625.500px; display: flex; flex-direction: column; border-radius: 20px; overflow: hidden; background: #000; }
.tabs { flex: none; height: 84px; box-sizing: border-box; padding-top: 16px; display: flex; align-items: center; background: #dfe1e5; box-shadow: inset 0 2px #f1f2f4; font-size: 24px; }
.i-chev { margin-left: 33px; }
.i-plus { margin-right: 32px; }
.tab { align-self: stretch; position: relative; width: 480px; box-sizing: border-box; padding: 0 26px 0 24px; display: flex; align-items: center; background: #fff; border-radius: 16px 16px 0 0; }
.tab::before, .tab::after { content: ""; position: absolute; bottom: 0; width: 16px; height: 16px; }
.tab::before { left: -16px; background: radial-gradient(circle at 0 0, transparent 16px, #fff 16.5px); }
.tab::after { right: -16px; background: radial-gradient(circle at 100% 0, transparent 16px, #fff 16.5px); }
.tab span { margin: -1px 0 0 16px; }
.i-close { margin-left: 22px; }
.title { margin: -1px 0 0 16px; width: 350px; display: flex; justify-content: flex-end; font-size: 25px; -webkit-mask-image: linear-gradient(to right, transparent 0, #000 34px); mask-image: linear-gradient(to right, transparent 0, #000 34px); }
.i-fav { margin-left: 18px; }
.light { width: 24px; height: 24px; border-radius: 50%; margin: -14px 0 0 16px; flex: none; }
.green { margin-left: 64px; background: #61c454; }
.yellow { background: #f4bf4f; }
.red { background: #ec6a5e; margin-right: 42px; }

.toolbar { flex: none; height: 72px; display: flex; align-items: center; background: #fff; }
.i-dots { margin-left: 41px; }
.avatar { margin-left: 39px; width: 44px; height: 44px; line-height: 42px; border-radius: 50%; background: #8a6e63; color: #fff; font-size: 22px; text-align: center; }
.i-panel { margin-left: 28px; }
.i-ext { margin: -3px 0 0 35px; }
.bee { margin-left: 43px; width: 14px; font-size: 17px; color: #3a3fc0; }
.i-react { margin-left: 39px; }
.omnibox { margin-left: 28px; width: 2256px; height: 56px; box-sizing: border-box; padding: 0 22px 0 19px; display: flex; align-items: center; border-radius: 28px; background: #f1f3f4; }
.o-share { margin: -2px 0 0 35px; }
.o-trans { margin-left: 38px; }
.o-key { margin: -2px 0 0 35px; }
.url { margin-right: 22px; font-size: 28px; color: #696d72; }
.url em { font-style: normal; color: #202124; }
.i-reload { margin-left: 30px; }
.i-nav { margin-left: 37px; }
.i-reload + .i-nav { margin-left: 36px; }

.bookmarks { flex: none; height: 66px; border-bottom: 2px solid #d9dbde; box-sizing: border-box; display: flex; align-items: flex-start; background: #fff; font-size: 23.500px; }
.more { width: 75px; padding-left: 39px; line-height: 52px; }
.bm { display: flex; align-items: center; gap: 17px; margin-left: 32px; height: 56px; }
.bm + .bm { margin-left: 31.800px; }
.bm span { margin-top: -2px; }
.yahoo { font: 800 21px Inter, sans-serif; fill: #fff; }

.page { flex: 1; position: relative; display: flex; flex-direction: column; align-items: center; background: #000; }
.nav { align-self: stretch; height: 188px; padding-left: 244px; display: flex; align-items: center; font-size: 35px; color: #7f7f7f; }
.nav a { margin-right: 60px; }
.logo { width: 36px; font: 400 42px Lato, sans-serif; color: #fff; transform: scaleX(.85); transform-origin: left; }
.rule { width: 2px; height: 30px; margin-left: 5px; background: #555; }
.brand { margin-left: 8px; font: 400 13px Lato, sans-serif; color: #fff; }
.nav .home { margin-left: 121px; }
.card { margin-top: 76px; width: 640px; height: 1139.500px; box-sizing: border-box; border: 2px solid #dcdcdc; border-radius: 22px; background: #fff; display: flex; flex-direction: column; align-items: center; font-size: 31px; color: #757575; }
.photo { align-self: stretch; height: 600px; box-sizing: border-box; border: 2px solid #c0c0c0; padding: 2px; flex: none; }
.field { width: 572px; box-sizing: border-box; border-bottom: 1px solid #767676; display: flex; justify-content: center; line-height: 40px; flex: none; position: relative; }
.first { width: 636px; height: 140px; padding-top: 71px; }
.body { height: 132px; padding-top: 41px; }
.dated { height: 112px; padding-top: 43px; }
.dated + .foot { margin-top: 32px; }
.grip { position: absolute; right: 1px; bottom: 1px; }
.foot { align-self: stretch; flex: 1; border-top: 2px solid #d6d6d6; border-radius: 0 0 20px 20px; padding: 16px 0 0 32px; display: flex; align-items: flex-start; background: linear-gradient(#f8f8f8 0, #f5f5f5 50%, #d9d9d9 100%); font-size: 31px; color: #212529; }
.button { box-sizing: border-box; width: 179px; height: 60px; border: 2px solid #767676; border-radius: 5px; background: #efefef; color: #000; display: flex; justify-content: center; line-height: 58px; }
.chosen { margin-left: 9px; line-height: 62px; }
.add { margin: 27px 0 0 132px; }
.scroll { position: absolute; right: 4px; top: 20px; bottom: 3px; width: 14px; border-radius: 7px; background: #7b7b7b; }

.dock { flex: none; margin: 2.500px 0 0 122px; width: 2635px; height: 112px; box-sizing: border-box; padding: 0 5px; display: flex; align-items: center; border-radius: 38px; background: linear-gradient(to right, #5d5477 0, #5e5480 550px, #60538e 850px, #6453a6 1300px, #6755ac 1500px, #8c56c4 1700px, #9856cd 1950px, #8b56c5 2200px, #7555b0 2450px, #6f54a4 100%); box-shadow: inset 0 0 0 2px rgba(255, 255, 255, .2); }
.dock svg { width: 94px; height: 112px; overflow: visible; }
.sep { flex: none; width: 3px; height: 84px; margin: 0 20px 0 22px; background: #281e50; }
.sep.narrow { width: 2px; margin: 0 20px; }
.dot { fill: #06031c; }
.count { font: 400 24px Inter, sans-serif; fill: #fff; }
.tv { font: 500 33px Inter, sans-serif; fill: #fff; }
.month { font: 700 16px "Liberation Sans", sans-serif; fill: #fff; }
.day { font: 300 45px Inter, sans-serif; fill: #222; }
.ij { font: 700 27px "DejaVu Sans Mono", monospace; fill: #fff; }
.petal { mix-blend-mode: multiply; opacity: .88; }
</style>
